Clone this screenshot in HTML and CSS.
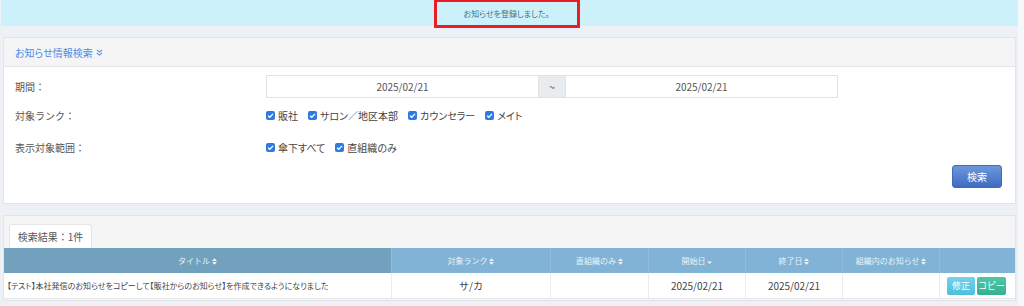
FILE: index.html
```html
<!DOCTYPE html>
<html lang="ja">
<head>
    <meta charset="UTF-8">
    <title>お知らせ情報検索</title>
    <link rel="stylesheet" href="styles.css">
</head>
<body>
    <div class="page">
        <div class="alert">
            <div class="alert-box">お知らせを登録しました。</div>
        </div>

        <div class="panel search-panel">
            <div class="panel-heading">お知らせ情報検索 <svg class="chev" viewBox="0 0 8 8"><path d="M1 1 L4 3.5 L7 1 M1 4.5 L4 7 L7 4.5" /></svg></div>
            <div class="panel-body">
                <div class="form-row row-date">
                    <div class="form-label">期間：</div>
                    <div class="date-group">
                        <div class="date-input">2025/02/21</div>
                        <div class="date-addon">~</div>
                        <div class="date-input">2025/02/21</div>
                    </div>
                </div>
                <div class="form-row row-check">
                    <div class="form-label">対象ランク：</div>
                    <div class="checks">
                        <label class="check"><span class="box"><svg viewBox="0 0 10 10"><path d="M2.3 5.2 L4.2 7 L7.8 3.2" /></svg></span>販社</label>
                        <label class="check"><span class="box"><svg viewBox="0 0 10 10"><path d="M2.3 5.2 L4.2 7 L7.8 3.2" /></svg></span>サロン／地区本部</label>
                        <label class="check"><span class="box"><svg viewBox="0 0 10 10"><path d="M2.3 5.2 L4.2 7 L7.8 3.2" /></svg></span>カウンセラー</label>
                        <label class="check"><span class="box"><svg viewBox="0 0 10 10"><path d="M2.3 5.2 L4.2 7 L7.8 3.2" /></svg></span>メイト</label>
                    </div>
                </div>
                <div class="form-row row-scope">
                    <div class="form-label">表示対象範囲：</div>
                    <div class="checks">
                        <label class="check"><span class="box"><svg viewBox="0 0 10 10"><path d="M2.3 5.2 L4.2 7 L7.8 3.2" /></svg></span>傘下すべて</label>
                        <label class="check"><span class="box"><svg viewBox="0 0 10 10"><path d="M2.3 5.2 L4.2 7 L7.8 3.2" /></svg></span>直組織のみ</label>
                    </div>
                </div>
                <div class="actions">
                    <button class="btn-search">検索</button>
                </div>
            </div>
        </div>

        <div class="panel result-panel">
            <div class="tabs">
                <div class="tab">検索結果：1件</div>
            </div>
            <table class="result-table">
                <thead>
                    <tr>
                        <th class="col-title active">タイトル <span class="sort"><svg viewBox="0 0 6 8"><path d="M3 0 L6 3.3 H0 Z M3 8 L6 4.7 H0 Z" /></svg></span></th>
                        <th class="col-rank">対象ランク <span class="sort"><svg viewBox="0 0 6 8"><path d="M3 0 L6 3.3 H0 Z M3 8 L6 4.7 H0 Z" /></svg></span></th>
                        <th class="col-direct">直組織のみ <span class="sort"><svg viewBox="0 0 6 8"><path d="M3 0 L6 3.3 H0 Z M3 8 L6 4.7 H0 Z" /></svg></span></th>
                        <th class="col-date">開始日 <span class="sort"><svg viewBox="0 0 6 8"><path d="M0 4 H6 L3 7 Z" /></svg></span></th>
                        <th class="col-date">終了日 <span class="sort"><svg viewBox="0 0 6 8"><path d="M3 0 L6 3.3 H0 Z M3 8 L6 4.7 H0 Z" /></svg></span></th>
                        <th class="col-org">組織内のお知らせ <span class="sort"><svg viewBox="0 0 6 8"><path d="M3 0 L6 3.3 H0 Z M3 8 L6 4.7 H0 Z" /></svg></span></th>
                        <th class="col-ops"></th>
                    </tr>
                </thead>
                <tbody>
                    <tr>
                        <td class="title">【テスト】本社発信のお知らせをコピーして【販社からのお知らせ】を作成できるようになりました</td>
                        <td>サ/カ</td>
                        <td></td>
                        <td>2025/02/21</td>
                        <td>2025/02/21</td>
                        <td></td>
                        <td class="ops">
                            <button class="btn-edit">修正</button><button class="btn-copy">コピー</button>
                        </td>
                    </tr>
                </tbody>
            </table>
        </div>
    </div>
</body>
</html>
```

FILE: styles.css
```css
body {
    margin: 0;
    padding: 0;
    background: #f6f7f9;
    font-family: "Noto Sans CJK JP", "Noto Sans", sans-serif;
    font-size: 10px;
    color: #555;
    overflow: hidden;
}
.page {
    width: 1018px;
    height: 306px;
    background: #edf1f6;
    padding-left: 1px;
    box-sizing: border-box;
}
.alert {
    height: 26px;
    background: #cdf1fa;
    display: flex;
    justify-content: center;
    overflow: visible;
}
.alert-box {
    box-sizing: border-box;
    width: 146px;
    height: 28px;
    margin-left: -6px;
    border: 3px solid #ec1c24;
    border-top-width: 2px;
    display: flex;
    align-items: center;
    justify-content: center;
    color: #47707d;
    font-size: 8px;
    font-feature-settings: "palt";
    position: relative;
}
.panel {
    margin-left: 2px;
    width: 1013px;
    border: 1px solid #e1e5ea;
    box-sizing: border-box;
}
.search-panel {
    margin-top: 11px;
    background: #fff;
}
.panel-heading {
    height: 29px;
    background: #f5f5f5;
    border-bottom: 1px solid #e6e6e6;
    box-sizing: border-box;
    padding-left: 11px;
    display: flex;
    align-items: center;
    color: #4d8ce8;
    font-size: 10px;
    font-feature-settings: "palt";
}
.chev {
    width: 7px;
    height: 7px;
    margin-left: 3px;
    fill: none;
    stroke: #4d8ce8;
    stroke-width: 1.2;
}
.panel-body {
    padding: 8px 13px 15px 11px;
}
.form-row {
    display: flex;
    align-items: center;
}
.form-label {
    width: 251px;
    color: #555;
}
.row-date {
    height: 23px;
}
.row-check {
    height: 20px;
    margin-top: 7px;
}
.row-scope {
    height: 20px;
    margin-top: 12px;
}
.date-group {
    display: flex;
    width: 572px;
    height: 23px;
    border: 1px solid #e3e3e3;
    box-sizing: border-box;
}
.date-input {
    flex: 1;
    display: flex;
    align-items: center;
    justify-content: center;
    color: #555;
}
.date-addon {
    width: 26px;
    background: #e9ecef;
    border-left: 1px solid #e3e3e3;
    border-right: 1px solid #e3e3e3;
    display: flex;
    align-items: center;
    justify-content: center;
    color: #555;
}
.checks {
    display: flex;
    gap: 10px;
    font-feature-settings: "palt";
}
.check {
    display: flex;
    align-items: center;
    gap: 3px;
    color: #444;
}
.box {
    width: 9px;
    height: 9px;
    border-radius: 2px;
    background: #2b7be4;
    display: inline-flex;
}
.box svg {
    width: 9px;
    height: 9px;
    fill: none;
    stroke: #fff;
    stroke-width: 1.4;
}
.actions {
    display: flex;
    justify-content: flex-end;
    margin-top: 8px;
}
.btn-search {
    width: 50px;
    height: 23px;
    border: 1px solid #3e6cba;
    border-radius: 3px;
    background: linear-gradient(#6b98dc, #3f6bc0);
    color: #fff;
    font-family: inherit;
    font-size: 10px;
    padding: 0;
}
.result-panel {
    margin-top: 11px;
    background: #f5f5f5;
    padding-top: 8px;
    height: 86px;
}
.tabs {
    display: flex;
    padding-left: 5px;
}
.tab {
    width: 83px;
    height: 24px;
    background: #fff;
    border: 1px solid #e6e6e6;
    border-bottom: none;
    border-radius: 3px 3px 0 0;
    box-sizing: border-box;
    display: flex;
    align-items: center;
    justify-content: center;
    color: #555;
}
.result-table {
    width: 100%;
    border-collapse: collapse;
    table-layout: fixed;
}
.result-table th {
    height: 25px;
    background: #80b3d6;
    color: #eaf3fa;
    font-weight: normal;
    font-size: 8px;
    border-left: 1px solid #8dbcdc;
    padding: 0;
}
.result-table th.active {
    background: #72a1be;
    border-left: none;
}
.col-title { width: 387px; }
.col-rank { width: 158px; }
.col-direct { width: 97px; }
.col-date { width: 96px; }
.col-org { width: 96px; }
.sort svg {
    width: 5px;
    height: 7px;
    fill: #eaf3fa;
    vertical-align: -1px;
}
.result-table td {
    height: 25px;
    background: #fff;
    border-left: 1px solid #ececec;
    border-bottom: 1px solid #e6e6e6;
    text-align: center;
    color: #444;
    padding: 0;
}
.result-table td.title {
    text-align: left;
    padding-left: 3px;
    border-left: none;
    white-space: nowrap;
    overflow: hidden;
    font-size: 8px;
    font-feature-settings: "palt";
}
.ops {
    padding-left: 7px !important;
    text-align: left !important;
}
.ops button {
    height: 18px;
    border: none;
    border-radius: 2px;
    color: #fff;
    font-family: inherit;
    font-size: 9px;
    padding: 0;
    vertical-align: middle;
}
.btn-edit {
    width: 28px;
    background: linear-gradient(#71d3ea, #4dbfdc);
    margin-right: 2px;
}
.btn-copy {
    width: 29px;
    background: linear-gradient(#4fc6a8, #34b090);
}
```
